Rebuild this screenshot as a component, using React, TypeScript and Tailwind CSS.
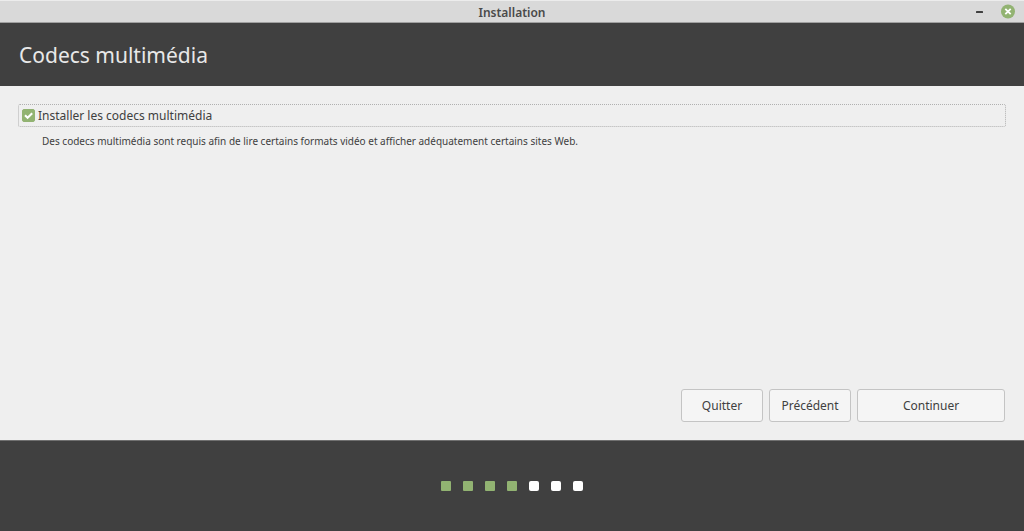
import { useState } from 'react'

const TOTAL_STEPS = 7

interface StepDotsProps {
  current: number
}

function StepDots({ current }: StepDotsProps) {
  return (
    <ol className="flex gap-3">
      {Array.from({ length: TOTAL_STEPS }, (_, i) => (
        <li
          key={i}
          className={`h-2.5 w-2.5 ${i < current ? 'rounded-[1px] bg-[#92b372]' : 'rounded-xs bg-white'}`}
        />
      ))}
    </ol>
  )
}

const buttonClass =
  'h-[33px] rounded-[3px] border border-[#c4c4c4] bg-[#f5f5f5] text-[12px] text-[#404040] hover:bg-white'

export default function App() {
  const [installCodecs, setInstallCodecs] = useState(true)

  return (
    <div className="flex min-h-screen flex-col bg-[#efefef] font-['Noto_Sans',sans-serif] text-[#404040]">
      {/* Title bar */}
      <div className="grid h-[23px] grid-cols-[1fr_auto_1fr] items-center border-t border-b border-t-[#ececec] border-b-[#a0a0a0] bg-[#d9d9d9] px-2">
        <span />
        <span className="pt-0.5 text-[12px] leading-4 font-semibold text-[#4a4a4a]">Installation</span>
        <div className="flex items-center justify-end gap-3">
          <button aria-label="Réduire" className="flex h-4 w-4 items-center justify-center">
            <svg width="16" height="16" viewBox="0 0 16 16">
              <rect x="4" y="7" width="7" height="2" rx="0.5" fill="#404040" />
            </svg>
          </button>
          <button aria-label="Fermer" className="flex h-4 w-4 items-center justify-center">
            <svg width="16" height="16" viewBox="0 0 16 16">
              <circle cx="8" cy="7.5" r="7" fill="#92b372" />
              <path d="M5.3 4.8l5.4 5.4M10.7 4.8l-5.4 5.4" stroke="#fff" strokeWidth="1.8" />
            </svg>
          </button>
        </div>
      </div>

      <header className="flex h-[63px] items-center bg-[#404040] px-[19px]">
        <h1 className="text-[21px] leading-8 text-[#e8e8e8]">Codecs multimédia</h1>
      </header>

      <main className="flex flex-1 flex-col px-[18px] py-[18px]">
        <label className="flex h-[23px] items-center gap-[3px] rounded-[2px] border border-dotted border-[#b0b0b0] px-[3px] text-[12px]">
          <span className="relative flex h-[13px] w-[13px]">
            <input
              type="checkbox"
              checked={installCodecs}
              onChange={(e) => setInstallCodecs(e.target.checked)}
              aria-describedby="codecs-hint"
              className="h-[13px] w-[13px] appearance-none rounded-xs border border-[#b0b0b0] bg-white checked:border-[#92b372] checked:bg-[#92b372]"
            />
            {installCodecs && (
              <svg className="pointer-events-none absolute inset-0" width="13" height="13" viewBox="0 0 13 13">
                <path d="M3 6.2l2.6 2.6L10.2 4.2" fill="none" stroke="#fff" strokeWidth="2" />
              </svg>
            )}
          </span>
          Installer les codecs multimédia
        </label>
        <p id="codecs-hint" className="mt-1.5 px-6 text-[10px] leading-4">
          Des codecs multimédia sont requis afin de lire certains formats vidéo et afficher adéquatement certains sites Web.
        </p>

        <div className="mt-auto flex justify-end gap-1.5 pr-px">
          <button className={`${buttonClass} w-[82px]`}>Quitter</button>
          <button className={`${buttonClass} w-[82px]`}>Précédent</button>
          <button className={`${buttonClass} w-[148px]`}>Continuer</button>
        </div>
      </main>

      <footer className="flex h-[91px] items-center justify-center border-t border-[#707070] bg-[#404040]">
        <StepDots current={4} />
      </footer>
    </div>
  )
}
